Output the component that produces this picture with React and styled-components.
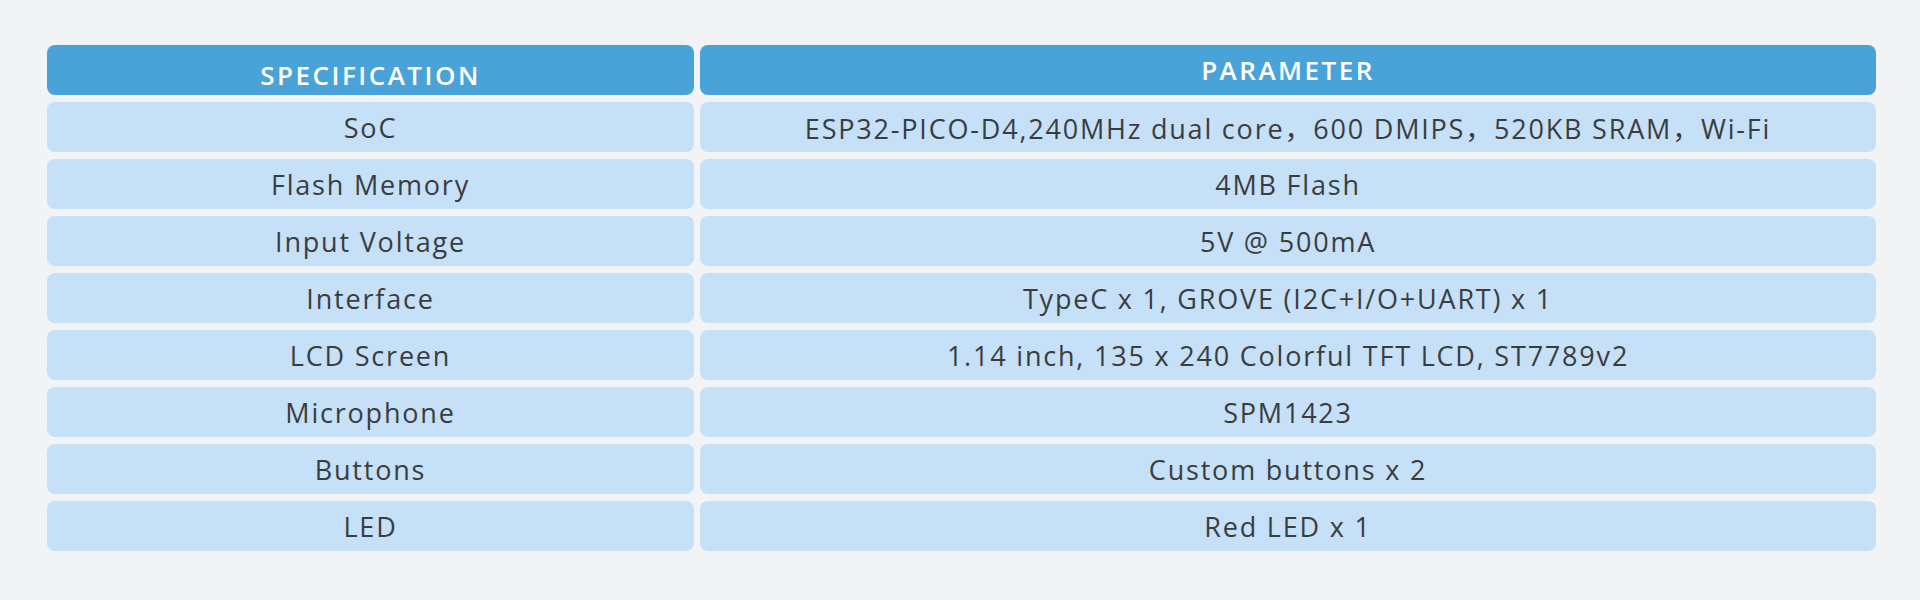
import React from 'react'
import styled, { createGlobalStyle } from 'styled-components'

const GlobalStyle = createGlobalStyle`
  html, body {
    margin: 0;
    padding: 0;
    background: #f2f3f4;
  }
  body {
    font-family: 'Open Sans', 'Noto Sans CJK SC', sans-serif;
  }
`

const Page = styled.div`
  width: 1920px;
  height: 600px;
  box-sizing: border-box;
  padding: 45px 44px 0 47px;
  background: #f2f3f4;
`

const Table = styled.div`
  display: grid;
  grid-template-columns: 647px 1fr;
  column-gap: 6px;
  row-gap: 7px;
`

const HeadCell = styled.div`
  height: 50px;
  box-sizing: border-box;
  padding-top: ${p => p.$drop || 0}px;
  display: flex;
  align-items: center;
  justify-content: center;
  background: #4aa3d8;
  border-radius: 8px;
  color: #ffffff;
  font-family: 'Open Sans', sans-serif;
  font-weight: 600;
  font-size: 26px;
  letter-spacing: 2.5px;
`

const Cell = styled.div`
  height: 50px;
  display: flex;
  align-items: center;
  justify-content: center;
  background: #c5e0f7;
  border-radius: 8px;
  color: #3a3d40;
  font-size: 27px;
  letter-spacing: 1.8px;
  white-space: pre;
`

const rows = [
  ['SoC', 'ESP32-PICO-D4,240MHz dual core，600 DMIPS，520KB SRAM，Wi-Fi'],
  ['Flash Memory', '4MB Flash'],
  ['Input Voltage', '5V @ 500mA'],
  ['Interface', 'TypeC x 1, GROVE (I2C+I/O+UART) x 1'],
  ['LCD Screen', '1.14 inch, 135 x 240 Colorful TFT LCD, ST7789v2'],
  ['Microphone', 'SPM1423'],
  ['Buttons', 'Custom buttons x 2'],
  ['LED', 'Red LED x 1']
]

const App = () => {
  return (
    <Page>
      <GlobalStyle />
      <Table>
        <HeadCell $drop={9}>SPECIFICATION</HeadCell>
        <HeadCell>PARAMETER</HeadCell>
        {rows.map(([spec, param]) => (
          <React.Fragment key={spec}>
            <Cell>{spec}</Cell>
            <Cell>{param}</Cell>
          </React.Fragment>
        ))}
      </Table>
    </Page>
  )
}

export default App
